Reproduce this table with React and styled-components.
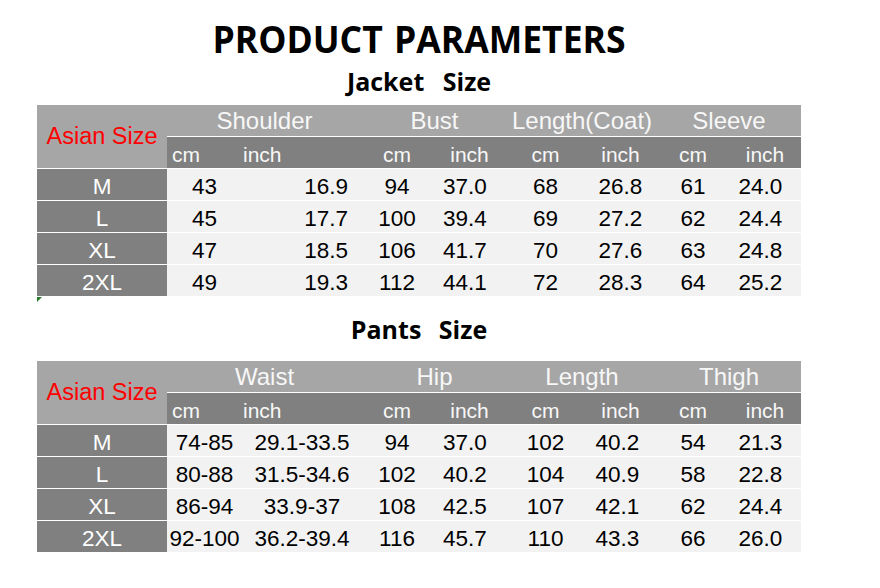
import React from "react";
import styled, { createGlobalStyle } from "styled-components";

const GlobalStyle = createGlobalStyle`
  html, body { margin: 0; padding: 0; background: #ffffff; }
  body { font-family: "Liberation Sans", Arial, sans-serif; }
`;

const Page = styled.div`
  width: 880px;
  height: 588px;
  box-sizing: border-box;
  padding-left: 37px;
  display: flex;
  flex-direction: column;
  align-items: flex-start;
  overflow: hidden;
`;

const Block = styled.div`
  width: 764px;
  display: flex;
  flex-direction: column;
`;

const Title = styled.h1`
  margin: 18px 0 0;
  font-family: "Open Sans", "Noto Sans", sans-serif;
  font-weight: 700;
  font-size: 38px;
  line-height: 40px;
  height: 40px;
  color: #000;
  text-align: center;
  word-spacing: 2px;
  transform: scaleX(0.935);
`;

const Subtitle = styled.h2`
  margin: ${(p) => p.$mt}px 0 0;
  font-family: "Open Sans", "Noto Sans", sans-serif;
  font-weight: 700;
  font-size: 25px;
  line-height: 28px;
  height: 28px;
  color: #000;
  text-align: center;
  word-spacing: ${(p) => p.$ws}px;
`;

const Grid = styled.div`
  position: relative;
  margin-top: ${(p) => p.$mt}px;
  display: grid;
  grid-template-columns: 130px 75px 120px 70px 75px 77px 73px 72px 72px;
  grid-auto-rows: 31px;
  row-gap: 1px;
  background: #ffffff;

  ${(p) =>
    p.$marker &&
    `&::after {
      content: "";
      position: absolute;
      left: 0;
      top: calc(100% + 1px);
      width: 0;
      height: 0;
      border-top: 5px solid #2a7d2a;
      border-right: 5px solid transparent;
    }`}
`;

const Corner = styled.div`
  grid-row: span 2;
  background: #a6a6a6;
  color: #ff0000;
  font-size: 23.5px;
  display: flex;
  align-items: center;
  justify-content: center;
  white-space: nowrap;
`;

const GroupHead = styled.div`
  grid-column: span 2;
  background: #a6a6a6;
  color: #f7f7f7;
  font-size: 24px;
  line-height: 30px;
  padding-top: 1px;
  text-align: center;
  white-space: nowrap;
`;

const UnitHead = styled.div`
  background: #808080;
  color: #f7f7f7;
  font-size: 21px;
  line-height: 27px;
  padding-top: 4px;
  padding-left: ${(p) => p.$pl || 0}px;
  text-align: ${(p) => p.$align || "center"};
  white-space: nowrap;
`;

const SizeCell = styled.div`
  background: #808080;
  color: #ffffff;
  font-size: 22.5px;
  line-height: 27px;
  padding-top: 4px;
  text-align: center;
  white-space: nowrap;
`;

const ValueCell = styled.div`
  background: #f2f2f2;
  color: #000000;
  font-size: 22.5px;
  line-height: 26px;
  padding-top: 5px;
  padding-right: ${(p) => p.$pr || 0}px;
  text-align: ${(p) => p.$align || "center"};
  white-space: nowrap;
  overflow: visible;
`;

const unitHeads = [
  { label: "cm", align: "left", pl: 5 },
  { label: "inch", align: "left", pl: 1 },
  { label: "cm" },
  { label: "inch" },
  { label: "cm" },
  { label: "inch" },
  { label: "cm" },
  { label: "inch" },
];

const jacket = {
  groups: ["Shoulder", "Bust", "Length(Coat)", "Sleeve"],
  valueFormat: [
    {},
    { align: "right", pr: 14 },
    {},
    { pr: 9 },
    {},
    {},
    {},
    { pr: 9 },
  ],
  rows: [
    ["M", "43", "16.9", "94", "37.0", "68", "26.8", "61", "24.0"],
    ["L", "45", "17.7", "100", "39.4", "69", "27.2", "62", "24.4"],
    ["XL", "47", "18.5", "106", "41.7", "70", "27.6", "63", "24.8"],
    ["2XL", "49", "19.3", "112", "44.1", "72", "28.3", "64", "25.2"],
  ],
};

const pants = {
  groups: ["Waist", "Hip", "Length", "Thigh"],
  valueFormat: [{}, {}, {}, { pr: 9 }, {}, { pr: 6 }, {}, { pr: 9 }],
  rows: [
    ["M", "74-85", "29.1-33.5", "94", "37.0", "102", "40.2", "54", "21.3"],
    ["L", "80-88", "31.5-34.6", "102", "40.2", "104", "40.9", "58", "22.8"],
    ["XL", "86-94", "33.9-37", "108", "42.5", "107", "42.1", "62", "24.4"],
    ["2XL", "92-100", "36.2-39.4", "116", "45.7", "110", "43.3", "66", "26.0"],
  ],
};

function SizeTable({ data, mt, marker }) {
  return (
    <Grid $mt={mt} $marker={marker}>
      <Corner>Asian Size</Corner>
      {data.groups.map((g) => (
        <GroupHead key={g}>{g}</GroupHead>
      ))}
      {unitHeads.map((u, i) => (
        <UnitHead key={i} $align={u.align} $pl={u.pl}>
          {u.label}
        </UnitHead>
      ))}
      {data.rows.map((row) => (
        <React.Fragment key={row[0]}>
          <SizeCell>{row[0]}</SizeCell>
          {row.slice(1).map((v, i) => (
            <ValueCell
              key={i}
              $align={data.valueFormat[i].align}
              $pr={data.valueFormat[i].pr}
            >
              {v}
            </ValueCell>
          ))}
        </React.Fragment>
      ))}
    </Grid>
  );
}

export default function App() {
  return (
    <>
      <GlobalStyle />
      <Page>
        <Block>
          <Title>PRODUCT PARAMETERS</Title>
          <Subtitle $mt={9} $ws={12}>Jacket Size</Subtitle>
          <SizeTable data={jacket} mt={10} marker />
          <Subtitle $mt={19} $ws={11}>Pants Size</Subtitle>
          <SizeTable data={pants} mt={18} />
        </Block>
      </Page>
    </>
  );
}
